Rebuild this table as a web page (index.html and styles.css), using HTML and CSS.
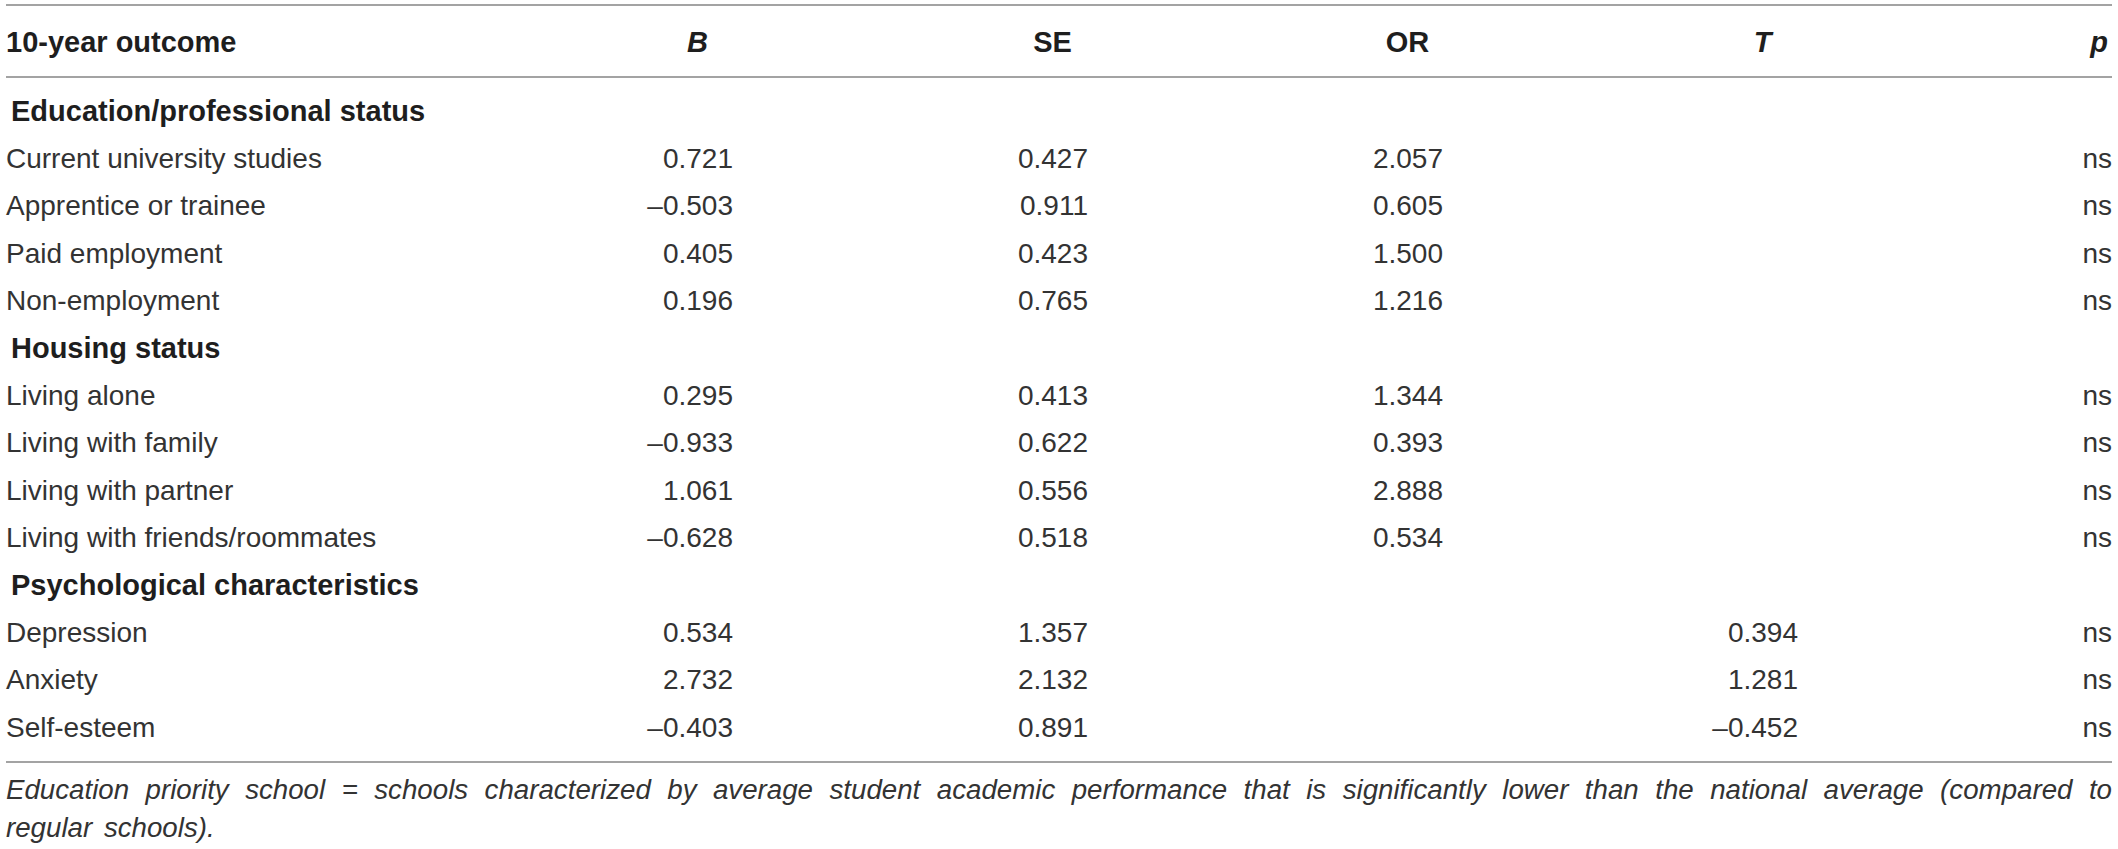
FILE: index.html
```html
<!DOCTYPE html>
<html>
<head>
  <meta charset="UTF-8">
  <title>10-year outcome</title>
  <link rel="stylesheet" href="styles.css">
</head>
<body>
  <table class="results">
    <colgroup>
      <col class="col-label">
      <col class="col-num">
      <col class="col-num">
      <col class="col-num">
      <col class="col-num">
      <col class="col-p">
    </colgroup>
    <thead>
      <tr>
        <th class="label">10-year outcome</th>
        <th><i>B</i></th>
        <th>SE</th>
        <th>OR</th>
        <th><i>T</i></th>
        <th class="p"><i>p</i></th>
      </tr>
    </thead>
    <tbody>
      <tr class="section"><td>Education/professional status</td><td></td><td></td><td></td><td></td><td></td></tr>
      <tr><td>Current university studies</td><td class="num">0.721</td><td class="num">0.427</td><td class="num">2.057</td><td class="num"></td><td class="p">ns</td></tr>
      <tr><td>Apprentice or trainee</td><td class="num">&ndash;0.503</td><td class="num">0.911</td><td class="num">0.605</td><td class="num"></td><td class="p">ns</td></tr>
      <tr><td>Paid employment</td><td class="num">0.405</td><td class="num">0.423</td><td class="num">1.500</td><td class="num"></td><td class="p">ns</td></tr>
      <tr><td>Non-employment</td><td class="num">0.196</td><td class="num">0.765</td><td class="num">1.216</td><td class="num"></td><td class="p">ns</td></tr>
      <tr class="section"><td>Housing status</td><td></td><td></td><td></td><td></td><td></td></tr>
      <tr><td>Living alone</td><td class="num">0.295</td><td class="num">0.413</td><td class="num">1.344</td><td class="num"></td><td class="p">ns</td></tr>
      <tr><td>Living with family</td><td class="num">&ndash;0.933</td><td class="num">0.622</td><td class="num">0.393</td><td class="num"></td><td class="p">ns</td></tr>
      <tr><td>Living with partner</td><td class="num">1.061</td><td class="num">0.556</td><td class="num">2.888</td><td class="num"></td><td class="p">ns</td></tr>
      <tr><td>Living with friends/roommates</td><td class="num">&ndash;0.628</td><td class="num">0.518</td><td class="num">0.534</td><td class="num"></td><td class="p">ns</td></tr>
      <tr class="section"><td>Psychological characteristics</td><td></td><td></td><td></td><td></td><td></td></tr>
      <tr><td>Depression</td><td class="num">0.534</td><td class="num">1.357</td><td class="num"></td><td class="num">0.394</td><td class="p">ns</td></tr>
      <tr><td>Anxiety</td><td class="num">2.732</td><td class="num">2.132</td><td class="num"></td><td class="num">1.281</td><td class="p">ns</td></tr>
      <tr><td>Self-esteem</td><td class="num">&ndash;0.403</td><td class="num">0.891</td><td class="num"></td><td class="num">&ndash;0.452</td><td class="p">ns</td></tr>
    </tbody>
  </table>

  <p class="note">Education priority school = schools characterized by average student academic performance that is significantly lower than the national average (compared to regular schools).</p>
</body>
</html>
```

FILE: styles.css
```css
body {
  margin: 0;
  padding: 4px 6px 0;
  background-color: #fff;
  color: #333;
  font-family: "Liberation Sans", Arial, sans-serif;
}
.results {
  width: 100%;
  table-layout: fixed;
  border-collapse: collapse;
  border-top: 2px solid #a3a3a3;
  border-bottom: 2px solid #a3a3a3;
}
.col-label {
  width: 514px;
}
.col-num {
  width: 355px;
}
.results th {
  font-size: 29px;
  font-weight: bold;
  line-height: 32px;
  color: #1e1e1e;
  padding: 20px 0 18px;
  text-align: center;
  border-bottom: 2px solid #a3a3a3;
}
.results th.label {
  text-align: left;
}
.results th.p {
  text-align: right;
  padding-right: 4px;
}
.results td {
  font-size: 28px;
  line-height: 47.4px;
  padding: 0;
  white-space: nowrap;
}
.results tbody tr:first-child td {
  padding-top: 9.6px;
}
.results tbody tr:last-child td {
  padding-bottom: 10px;
}
.results td.num {
  text-align: right;
  padding-right: 142px;
}
.results td.p {
  text-align: right;
}
.section td {
  font-size: 29px;
  font-weight: bold;
  color: #1e1e1e;
  padding-left: 5px;
}
.note {
  margin: 8.2px 0 0;
  font-size: 27.7px;
  font-style: italic;
  line-height: 38px;
  word-spacing: 4px;
  text-align: justify;
}
```
